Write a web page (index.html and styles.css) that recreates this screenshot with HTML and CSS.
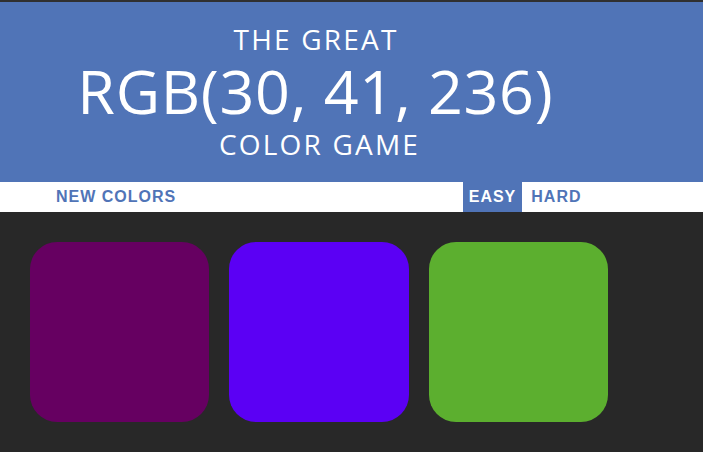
FILE: index.html
```html
<!DOCTYPE html>
<html>
<head>
<meta charset="utf-8">
<title>Color Game</title>
<link rel="stylesheet" href="styles.css">
</head>
<body>
<h1 class="title">
  <span class="title-small">The Great</span>
  <span class="title-big">RGB(30, 41, 236)</span>
  <span class="title-small title-game">Color Game</span>
</h1>
<div class="stripe">
  <button class="btn btn-reset">New Colors</button>
  <div class="modes">
    <button class="btn selected">Easy</button>
    <button class="btn">Hard</button>
  </div>
</div>
<div class="squares">
  <div class="square sq-purple"></div>
  <div class="square sq-violet"></div>
  <div class="square sq-green"></div>
</div>
</body>
</html>
```
FILE: styles.css
```css
html, body {
  margin: 0;
  padding: 0;
}
body {
  background: #282828;
  border-top: 2px solid #303030;
  font-family: "Open Sans", "Noto Sans", sans-serif;
}
.title {
  margin: 0;
  background: #5074b7;
  color: #fff;
  font-weight: normal;
  text-transform: uppercase;
  width: 630px;
  height: 180px;
  box-sizing: border-box;
  padding-top: 22px;
  text-align: center;
  display: flex;
  flex-direction: column;
  align-items: center;
  box-shadow: 73px 0 0 #5074b7;
}
.title-small {
  display: block;
  font-size: 28px;
  line-height: 30px;
  letter-spacing: 2.2px;
  padding-left: 2.2px;
}
.title-big {
  display: block;
  font-size: 61px;
  line-height: 60px;
  letter-spacing: 0.7px;
  padding-left: 0.7px;
  margin-top: 7px;
}
.title-game {
  margin-top: 8px;
  padding-left: 9px;
}
.stripe {
  background: #fff;
  height: 30px;
  display: flex;
  align-items: stretch;
  padding-left: 50px;
}
.modes {
  margin-left: 281px;
  display: flex;
  gap: 3.5px;
}
.btn {
  border: none;
  background: none;
  font-family: "Liberation Sans", Arial, sans-serif;
  font-weight: 700;
  font-size: 16px;
  letter-spacing: 1px;
  text-transform: uppercase;
  color: #5074b7;
  padding: 0 5.5px 0 6px;
  height: 30px;
  margin: 0;
}
.selected {
  background: #5074b7;
  color: #fff;
}
.squares {
  display: flex;
  gap: 20px;
  padding: 30px 0 0 29.5px;
}
.square {
  width: 179.5px;
  height: 180px;
  border-radius: 27px;
}
.sq-purple { background: #660061; }
.sq-violet { background: #5b00f4; }
.sq-green { background: #5caf2f; }
```
